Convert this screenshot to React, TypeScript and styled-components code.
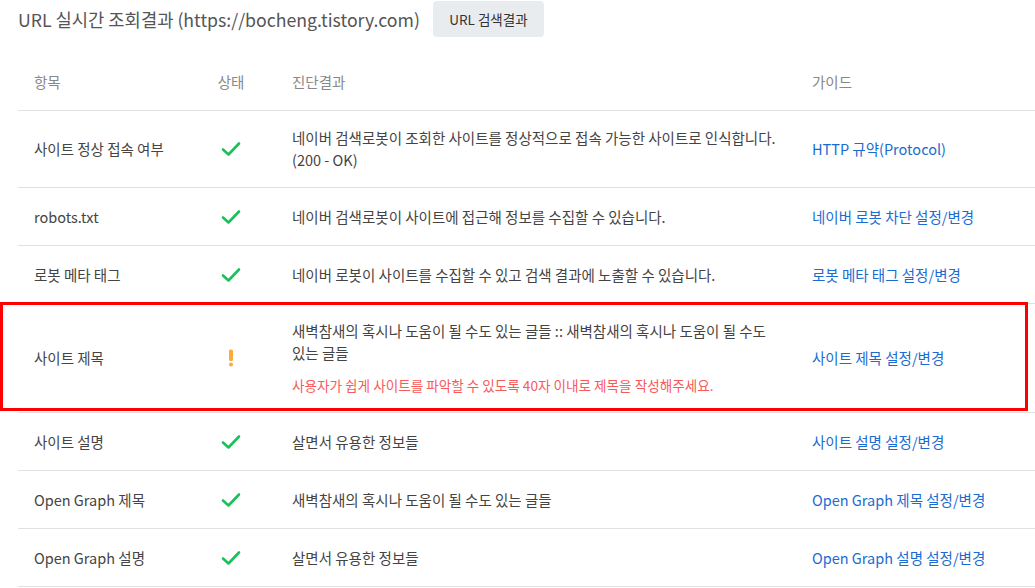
import React from "react";
import styled, { createGlobalStyle } from "styled-components";

const GlobalStyle = createGlobalStyle`
  html, body {
    margin: 0;
    padding: 0;
    background: #fff;
    font-family: "Noto Sans CJK KR", "Noto Sans", sans-serif;
    color: #333;
  }
`;

interface RowData {
  item: string;
  status: "ok" | "warn";
  result: string[];
  message?: string;
  guide: string;
  highlight?: boolean;
}

const rows: RowData[] = [
  {
    item: "사이트 정상 접속 여부",
    status: "ok",
    result: [
      "네이버 검색로봇이 조회한 사이트를 정상적으로 접속 가능한 사이트로 인식합니다.",
      "(200 - OK)",
    ],
    guide: "HTTP 규약(Protocol)",
  },
  {
    item: "robots.txt",
    status: "ok",
    result: ["네이버 검색로봇이 사이트에 접근해 정보를 수집할 수 있습니다."],
    guide: "네이버 로봇 차단 설정/변경",
  },
  {
    item: "로봇 메타 태그",
    status: "ok",
    result: ["네이버 로봇이 사이트를 수집할 수 있고 검색 결과에 노출할 수 있습니다."],
    guide: "로봇 메타 태그 설정/변경",
  },
  {
    item: "사이트 제목",
    status: "warn",
    result: [
      "새벽참새의 혹시나 도움이 될 수도 있는 글들 :: 새벽참새의 혹시나 도움이 될 수도",
      "있는 글들",
    ],
    message: "사용자가 쉽게 사이트를 파악할 수 있도록 40자 이내로 제목을 작성해주세요.",
    guide: "사이트 제목 설정/변경",
    highlight: true,
  },
  {
    item: "사이트 설명",
    status: "ok",
    result: ["살면서 유용한 정보들"],
    guide: "사이트 설명 설정/변경",
  },
  {
    item: "Open Graph 제목",
    status: "ok",
    result: ["새벽참새의 혹시나 도움이 될 수도 있는 글들"],
    guide: "Open Graph 제목 설정/변경",
  },
  {
    item: "Open Graph 설명",
    status: "ok",
    result: ["살면서 유용한 정보들"],
    guide: "Open Graph 설명 설정/변경",
  },
];

const CheckIcon = () => (
  <svg width="20" height="16" viewBox="0 0 20 16">
    <polyline
      points="2,8.5 7.5,13.5 18,2.5"
      fill="none"
      stroke="#19c15b"
      strokeWidth="2.6"
      strokeLinecap="round"
      strokeLinejoin="round"
    />
  </svg>
);

const WarnIcon = () => (
  <svg width="6" height="18" viewBox="0 0 6 18">
    <rect x="1" y="0.5" width="4" height="11.5" rx="1.6" fill="#ffa93b" />
    <circle cx="3" cy="15.5" r="2" fill="#ffa93b" />
  </svg>
);

const App = () => {
  return (
    <Page>
      <GlobalStyle />
      <TopBar>
        <Title>URL 실시간 조회결과 (https://bocheng.tistory.com)</Title>
        <SearchButton>URL 검색결과</SearchButton>
      </TopBar>
      <Table>
        <HeadRow>
          <HeadCell>항목</HeadCell>
          <HeadCell $center>상태</HeadCell>
          <HeadCell>진단결과</HeadCell>
          <HeadCell>가이드</HeadCell>
        </HeadRow>
        {rows.map((row) => (
          <Row key={row.item}>
            {row.highlight && <Highlight />}
            <ItemCell>{row.item}</ItemCell>
            <StatusCell>{row.status === "ok" ? <CheckIcon /> : <WarnIcon />}</StatusCell>
            <ResultCell>
              <div>
                {row.result.map((line) => (
                  <Line key={line}>{line}</Line>
                ))}
                {row.message && <Message>{row.message}</Message>}
              </div>
            </ResultCell>
            <GuideCell>
              <GuideLink href="#">{row.guide}</GuideLink>
            </GuideCell>
          </Row>
        ))}
      </Table>
    </Page>
  );
};

export default App;

const Page = styled.div`
  padding-left: 18px;
  width: 1035px;
  box-sizing: border-box;
`;

const TopBar = styled.div`
  display: flex;
  align-items: center;
  gap: 13px;
  height: 38px;
`;

const Title = styled.h2`
  margin: 0;
  font-size: 17.7px;
  font-weight: 400;
  color: #555;
`;

const SearchButton = styled.button`
  flex: none;
  height: 36px;
  width: 111px;
  border: none;
  border-radius: 4px;
  background: #e9ecef;
  color: #333;
  font-family: inherit;
  font-size: 13.5px;
  padding: 0;
`;

const Table = styled.div`
  margin-top: 17px;
  display: flex;
  flex-direction: column;
`;

const grid = `
  display: grid;
  grid-template-columns: 168px 90px 520px 1fr;
  align-items: center;
`;

const HeadRow = styled.div`
  ${grid}
  height: 55px;
  border-bottom: 1px solid #e1e1e1;
`;

const HeadCell = styled.div<{ $center?: boolean }>`
  padding-left: ${(p) => (p.$center ? "0" : "16px")};
  padding-bottom: 2px;
  text-align: ${(p) => (p.$center ? "center" : "left")};
  font-size: 14.5px;
  color: #888;
`;

const Row = styled.div`
  ${grid}
  position: relative;
  min-height: 57px;
  border-bottom: 1px solid #e1e1e1;
  font-size: 14.5px;
  line-height: 22px;
`;

const Highlight = styled.div`
  position: absolute;
  left: -18px;
  top: -2px;
  width: 1028px;
  bottom: 1px;
  border: 3px solid #ff0000;
  box-sizing: border-box;
  pointer-events: none;
`;

const ItemCell = styled.div`
  padding-left: 16px;
  color: #444;
`;

const StatusCell = styled.div`
  display: flex;
  justify-content: center;
  align-items: center;
`;

const ResultCell = styled.div`
  padding: 16px 0 16px 16px;
  color: #444;
`;

const Line = styled.div``;

const Message = styled.div`
  margin-top: 10px;
  font-size: 13.6px;
  color: #f85a5a;
`;

const GuideCell = styled.div`
  padding-left: 16px;
`;

const GuideLink = styled.a`
  color: #1a6bd2;
  text-decoration: none;
`;
